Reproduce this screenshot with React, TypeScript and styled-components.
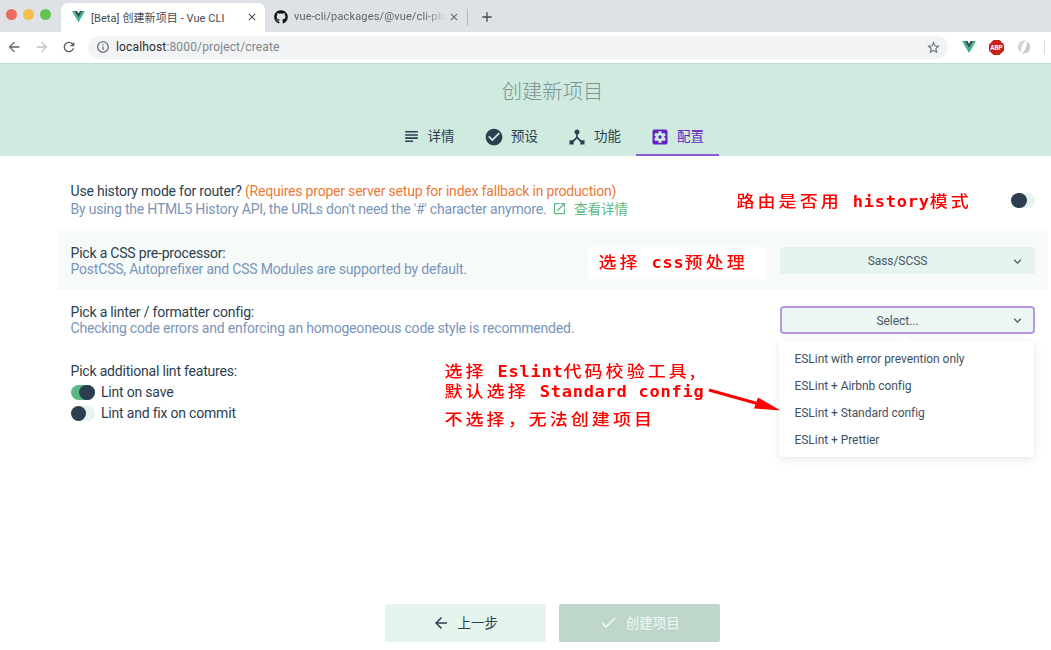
import React from "react";
import styled, { createGlobalStyle } from "styled-components";
import {
  MdSubject, MdCheckCircle, MdDeviceHub, MdSettingsApplications, MdOpenInNew, MdArrowBack,
  MdArrowForward, MdRefresh, MdInfoOutline, MdStarBorder, MdCheck, MdKeyboardArrowDown, MdClose, MdAdd,
} from "react-icons/md";
import { FaGithub } from "react-icons/fa";

const Global = createGlobalStyle`
  * { box-sizing: border-box; }
  body { margin: 0; background: #fff; overflow: hidden; }
  svg { display: block; flex: none; }
`;

const Page = styled.div`
  position: relative;
  display: flex;
  flex-direction: column;
  width: 1051px;
  height: 650px;
  background: #fff;
  color: #2c3e50;
  font-family: Roboto, "Noto Sans CJK SC", sans-serif;
  font-size: 14px;
  white-space: nowrap;
`;

/* Browser chrome */
const TabStrip = styled.div`
  display: flex;
  height: 32px;
  padding-left: 6px;
  background: #dee1e6;
`;
const Lights = styled.div`
  display: flex;
  gap: 6px;
  padding-top: 9px;
  width: 55px;
`;
const Light = styled.i<{ $color: string }>`
  width: 11px;
  height: 11px;
  border-radius: 50%;
  background: ${(p) => p.$color};
`;
const BrowserTab = styled.div<{ $active?: boolean; $width: number }>`
  display: flex;
  align-items: center;
  width: ${(p) => p.$width}px;
  height: 29px;
  margin-top: 3px;
  padding: 0 7px 2px ${(p) => (p.$active ? 11 : 9)}px;
  border-radius: 7px 7px 0 0;
  background: ${(p) => (p.$active ? "#fff" : "transparent")};
  color: ${(p) => (p.$active ? "#45494d" : "#5f6368")};
  font-size: 11px;
`;
const TabTitle = styled.span<{ $fade?: boolean; $spacing: number }>`
  flex: 1;
  margin-left: 6px;
  letter-spacing: ${(p) => p.$spacing}px;
  ${(p) => p.$fade && "mask-image: linear-gradient(90deg, #000 84%, transparent 99%);"}
`;
const TabDivider = styled.i`
  width: 1px;
  height: 17px;
  margin: 9px 11px 0 0;
  background: #b4b8bd;
`;
const NewTab = styled.div`
  display: flex;
  align-items: center;
  height: 28px;
  margin-top: 3px;
  color: #45494d;
`;
const Toolbar = styled.div`
  display: flex;
  align-items: center;
  height: 31px;
  padding: 0 5px 1px 6px;
  color: #5f6368;
`;
const Nav = styled.div`
  display: flex;
  gap: 11.5px;
  width: 82px;
`;
const Dim = styled.span`
  color: #bdc0c3;
`;
const Address = styled.div`
  display: flex;
  align-items: center;
  width: 860px;
  height: 23px;
  padding: 0 7px 0 8px;
  border-radius: 12px;
  background: #f1f3f4;
`;
const Url = styled.span`
  flex: 1;
  margin-left: 6px;
  color: #80868b;
  font-size: 12px;
  letter-spacing: 0.15px;
`;
const Host = styled.span`
  color: #2b2e32;
`;
const Extensions = styled.div`
  display: flex;
  align-items: center;
  gap: 13px;
  margin-left: 14px;
`;
const ExtDivider = styled.i`
  width: 1px;
  height: 14px;
  background: #dadce0;
`;

/* Wizard header */
const Header = styled.header`
  display: flex;
  flex-direction: column;
  align-items: center;
  justify-content: space-between;
  height: 92.5px;
  padding-left: 54px;
  border-top: 1px solid #c3ddd3;
  background: #cfebe0;
`;
const Title = styled.h1`
  margin: 10px 0 0;
  color: #7d9394;
  font: 300 20.3px/32px "Noto Sans CJK SC", sans-serif;
`;
const Steps = styled.nav`
  display: flex;
`;
const Step = styled.div<{ $active?: boolean }>`
  display: flex;
  align-items: center;
  justify-content: center;
  gap: 7px;
  width: 83px;
  height: 38px;
  padding: 0;
  border-bottom: 2px solid ${(p) => (p.$active ? "#8560d0" : "transparent")};
  color: ${(p) => (p.$active ? "#6124c1" : "#2c3e50")};
  font-size: 13.5px;
  line-height: 20px;
  svg {
    margin-top: 2px;
  }
`;

/* Prompts */
const Prompts = styled.main`
  flex: 1;
  padding: 16.5px 3px 0 58px;
`;
const Prompt = styled.section<{ $tinted?: boolean; $height: number }>`
  display: flex;
  justify-content: space-between;
  height: ${(p) => p.$height}px;
  padding: 0 13px 0 12.5px;
  background: ${(p) => (p.$tinted ? "#f6fbf9" : "transparent")};
`;
const Copy = styled.div<{ $top: number }>`
  padding-top: ${(p) => p.$top}px;
  letter-spacing: -0.2px;
`;
const Question = styled.div`
  height: 16px;
  line-height: 16px;
`;
const Warning = styled.span`
  color: #ea7a36;
`;
const Description = styled.div<{ $gap?: number }>`
  display: flex;
  align-items: center;
  height: 16px;
  margin-top: ${(p) => p.$gap ?? 0}px;
  color: #7a94b8;
  line-height: 16px;
`;
const More = styled.a`
  display: flex;
  align-items: center;
  gap: 7px;
  margin-left: 5.5px;
  color: #5cb987;
  font-size: 13.5px;
  letter-spacing: 0;
`;
const Switch = styled.i<{ $on?: boolean }>`
  display: flex;
  justify-content: ${(p) => (p.$on ? "flex-end" : "flex-start")};
  width: 24px;
  height: 15.5px;
  border-radius: 8px;
  background: ${(p) => (p.$on ? "#5cb987" : "#e6f4ee")};
  &::before {
    content: "";
    width: 15.5px;
    height: 15.5px;
    border-radius: 50%;
    background: #2c3e50;
  }
`;
const SwitchSlot = styled.div`
  padding-top: 20.5px;
`;
const Features = styled.div`
  padding-top: 2.5px;
`;
const Feature = styled.div`
  display: flex;
  align-items: center;
  gap: 6.5px;
  height: 21.2px;
  line-height: 16px;
`;
const SelectSlot = styled.div<{ $top: number }>`
  position: relative;
  padding-top: ${(p) => p.$top}px;
`;
const SelectBox = styled.div<{ $open?: boolean }>`
  display: flex;
  align-items: center;
  width: 255px;
  height: ${(p) => (p.$open ? 28 : 27)}px;
  padding: 1px ${(p) => (p.$open ? 8 : 10)}px 0;
  border: ${(p) => (p.$open ? "2px solid #b995e6" : "none")};
  border-radius: ${(p) => (p.$open ? 4 : 2)}px;
  background: ${(p) => (p.$open ? "#ecf7f3" : "#e6f3ee")};
  color: #485866;
  font-size: 12px;
`;
const SelectValue = styled.span`
  flex: 1;
  padding-right: 5px;
  text-align: center;
  letter-spacing: -0.05px;
`;
const Menu = styled.div`
  position: absolute;
  top: 51px;
  left: -1px;
  width: 255px;
  height: 116px;
  padding-top: 5px;
  border-radius: 3px;
  background: #fff;
  box-shadow: 0 2px 10px rgba(0, 0, 0, 0.1);
  &::before {
    content: "";
    position: absolute;
    top: -4px;
    left: 122px;
    border: 5px solid transparent;
    border-top: 0;
    border-bottom-color: #fff;
  }
`;
const Option = styled.div`
  height: 27.15px;
  padding-left: 15.5px;
  line-height: 27px;
  color: #3f4f5f;
  font-size: 12px;
  letter-spacing: -0.05px;
`;

/* Footer */
const Footer = styled.footer`
  display: flex;
  justify-content: center;
  gap: 13.5px;
  height: 46px;
  padding-left: 54px;
`;
const Action = styled.button<{ $primary?: boolean }>`
  display: flex;
  align-items: center;
  justify-content: center;
  gap: 8px;
  width: 161px;
  height: 37.5px;
  padding: 0 1px 1px 0;
  border: 0;
  border-radius: 2px;
  background: ${(p) => (p.$primary ? "#bfd6ca" : "#e6f4ee")};
  color: ${(p) => (p.$primary ? "#eff8f4" : "#2c3e50")};
  font: 13.5px "Noto Sans CJK SC", sans-serif;
  svg {
    margin-top: 1px;
  }
`;

/* Red notes placed over the page */
const Note = styled.div<{ $x: number; $y: number }>`
  position: absolute;
  left: ${(p) => p.$x}px;
  top: ${(p) => p.$y}px;
  height: 18px;
  color: #f00;
  font: 500 18px/18px "Noto Sans CJK SC", sans-serif;
  letter-spacing: 3.05px;
  transform: scaleY(0.88);
`;
const NoteBox = styled.div`
  position: absolute;
  left: 588px;
  top: 247px;
  width: 178px;
  height: 32px;
  background: #fff;
`;
const Latin = styled.span`
  font: bold 17px/18px "DejaVu Sans Mono", monospace;
  letter-spacing: 0.75px;
  white-space: pre;
`;
const Arrow = styled.svg`
  position: absolute;
  left: 705px;
  top: 384px;
`;

const VueLogo = ({ size = 13 }: { size?: number }) => (
  <svg width={size} height={size * 0.87} viewBox="0 0 26 22.5">
    <path d="M0 0h5.2L13 13.4 20.8 0H26L13 22.5z" fill="#41b883" />
    <path d="M5.2 0H10l3 5.2L16 0h4.8L13 13.4z" fill="#35495e" />
  </svg>
);

const AdBlock = () => (
  <svg width="15" height="15" viewBox="0 0 15 15">
    <path d="M4.5 0h6L15 4.5v6L10.500 15h-6L0 10.500v-6z" fill="#c9211b" />
    <text x="7.500" y="10" textAnchor="middle" fill="#fff" fontFamily="Roboto, sans-serif" fontSize="7" fontWeight="700" textLength="12.500" lengthAdjust="spacingAndGlyphs">ABP</text>
  </svg>
);

const Swirl = () => (
  <svg width="14" height="14" viewBox="0 0 14 14">
    <path d="M9 .8C4.500-.2.500 3 .8 7.300c.2 2.700 1.700 4.500 3.700 5.400C3.700 8.500 5 4 9 .8z" fill="#d6d6d6" />
    <path d="M5 13.200c4.500 1 8.500-2.200 8.200-6.500-.2-2.700-1.700-4.500-3.700-5.400C10.300 5.500 9 10 5 13.200z" fill="#cacaca" />
  </svg>
);

const steps = [
  { label: "详情", icon: <MdSubject size={19} /> },
  { label: "预设", icon: <MdCheckCircle size={20} /> },
  { label: "功能", icon: <MdDeviceHub size={20} /> },
  { label: "配置", icon: <MdSettingsApplications size={20} /> },
];

const linters = [
  "ESLint with error prevention only",
  "ESLint + Airbnb config",
  "ESLint + Standard config",
  "ESLint + Prettier",
];

export default function App() {
  return (
    <Page>
      <Global />
      <TabStrip>
        <Lights>
          <Light $color="#ed6a5e" />
          <Light $color="#f5bf4f" />
          <Light $color="#61c554" />
        </Lights>
        <BrowserTab $active $width={204}>
          <VueLogo />
          <TabTitle $spacing={0.08}>[Beta] 创建新项目 - Vue CLI</TabTitle>
          <MdClose size={12} />
        </BrowserTab>
        <BrowserTab $width={202}>
          <FaGithub size={14} color="#111" />
          <TabTitle $fade $spacing={0.15}>vue-cli/packages/@vue/cli-plu</TabTitle>
          <MdClose size={12} />
        </BrowserTab>
        <TabDivider />
        <NewTab><MdAdd size={16} /></NewTab>
      </TabStrip>
      <Toolbar>
        <Nav>
          <MdArrowBack size={16} />
          <Dim><MdArrowForward size={16} /></Dim>
          <MdRefresh size={16} />
        </Nav>
        <Address>
          <MdInfoOutline size={14} />
          <Url><Host>localhost</Host>:8000/project/create</Url>
          <MdStarBorder size={15} />
        </Address>
        <Extensions>
          <VueLogo size={14} />
          <AdBlock />
          <Swirl />
          <ExtDivider />
        </Extensions>
      </Toolbar>

      <Header>
        <Title>创建新项目</Title>
        <Steps>
          {steps.map((s, i) => (
            <Step key={s.label} $active={i === 3}>{s.icon}{s.label}</Step>
          ))}
        </Steps>
      </Header>

      <Prompts>
        <Prompt $height={59}>
          <Copy $top={10.7}>
            <Question>Use history mode for router? <Warning>(Requires proper server setup for index fallback in production)</Warning></Question>
            <Description $gap={2}>
              By using the HTML5 History API, the URLs don't need the '#' character anymore.
              <More><MdOpenInNew size={15} />查看详情</More>
            </Description>
          </Copy>
          <SwitchSlot><Switch /></SwitchSlot>
        </Prompt>
        <Prompt $tinted $height={59}>
          <Copy $top={14.2}>
            <Question>Pick a CSS pre-processor:</Question>
            <Description>PostCSS, Autoprefixer and CSS Modules are supported by default.</Description>
          </Copy>
          <SelectSlot $top={16}>
            <SelectBox><SelectValue>Sass/SCSS</SelectValue><MdKeyboardArrowDown size={15} /></SelectBox>
          </SelectSlot>
        </Prompt>
        <Prompt $height={59}>
          <Copy $top={14.2}>
            <Question>Pick a linter / formatter config:</Question>
            <Description>Checking code errors and enforcing an homogeoneous code style is recommended.</Description>
          </Copy>
          <SelectSlot $top={16}>
            <SelectBox $open><SelectValue>Select...</SelectValue><MdKeyboardArrowDown size={15} /></SelectBox>
            <Menu>{linters.map((l) => <Option key={l}>{l}</Option>)}</Menu>
          </SelectSlot>
        </Prompt>
        <Prompt $height={80}>
          <Copy $top={14.2}>
            <Question>Pick additional lint features:</Question>
            <Features>
              <Feature><Switch $on />Lint on save</Feature>
              <Feature><Switch />Lint and fix on commit</Feature>
            </Features>
          </Copy>
        </Prompt>
      </Prompts>

      <Footer>
        <Action><MdArrowBack size={18} />上一步</Action>
        <Action $primary><MdCheck size={19} />创建项目</Action>
      </Footer>

      <NoteBox />
      <Note $x={736.5} $y={191}>路由是否用<Latin> history</Latin>模式</Note>
      <Note $x={598.5} $y={252}>选择<Latin> css</Latin>预处理</Note>
      <Note $x={444.5} $y={361}>选择<Latin> Eslint</Latin>代码校验工具,</Note>
      <Note $x={444.5} $y={380.5}>默认选择<Latin> Standard config</Latin></Note>
      <Note $x={444.5} $y={409}>不选择，无法创建项目</Note>
      <Arrow width="76" height="30" viewBox="0 0 76 30">
        <path d="M4 6L54 20" stroke="#f00" strokeWidth="3" />
        <path d="M53 13.500L75.500 26.500L49 24.500z" fill="#f00" />
      </Arrow>
    </Page>
  );
}
